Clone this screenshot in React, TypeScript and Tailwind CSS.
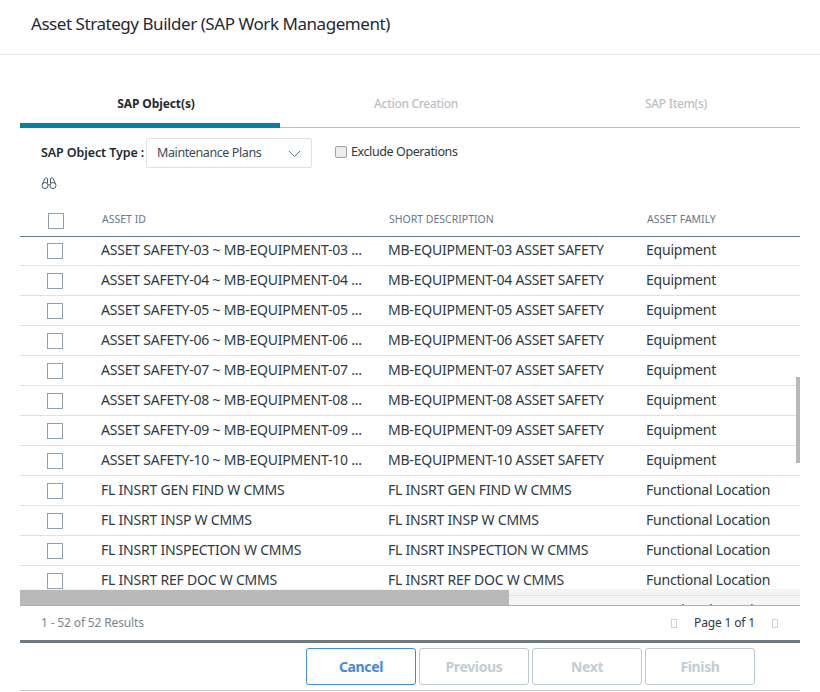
const FONT = "font-['Noto_Sans',sans-serif]";

const ROWS = [
  ["ASSET SAFETY-03 ~ MB-EQUIPMENT-03 ...", "MB-EQUIPMENT-03 ASSET SAFETY", "Equipment"],
  ["ASSET SAFETY-04 ~ MB-EQUIPMENT-04 ...", "MB-EQUIPMENT-04 ASSET SAFETY", "Equipment"],
  ["ASSET SAFETY-05 ~ MB-EQUIPMENT-05 ...", "MB-EQUIPMENT-05 ASSET SAFETY", "Equipment"],
  ["ASSET SAFETY-06 ~ MB-EQUIPMENT-06 ...", "MB-EQUIPMENT-06 ASSET SAFETY", "Equipment"],
  ["ASSET SAFETY-07 ~ MB-EQUIPMENT-07 ...", "MB-EQUIPMENT-07 ASSET SAFETY", "Equipment"],
  ["ASSET SAFETY-08 ~ MB-EQUIPMENT-08 ...", "MB-EQUIPMENT-08 ASSET SAFETY", "Equipment"],
  ["ASSET SAFETY-09 ~ MB-EQUIPMENT-09 ...", "MB-EQUIPMENT-09 ASSET SAFETY", "Equipment"],
  ["ASSET SAFETY-10 ~ MB-EQUIPMENT-10 ...", "MB-EQUIPMENT-10 ASSET SAFETY", "Equipment"],
  ["FL INSRT GEN FIND W CMMS", "FL INSRT GEN FIND W CMMS", "Functional Location"],
  ["FL INSRT INSP W CMMS", "FL INSRT INSP W CMMS", "Functional Location"],
  ["FL INSRT INSPECTION W CMMS", "FL INSRT INSPECTION W CMMS", "Functional Location"],
  ["FL INSRT REF DOC W CMMS", "FL INSRT REF DOC W CMMS", "Functional Location"],
  ["", "", "Functional Location"],
];

export default function App() {
  return (
    <div className={`${FONT} w-[820px] h-[692px] bg-white overflow-hidden text-[#2c3a44]`}>
      <div className="h-[55px] border-b border-[#e8e9ea] pl-[31px] pt-[11px] text-[17px] leading-[26px] tracking-[-0.45px] text-[#1f2a33]">
        Asset Strategy Builder (SAP Work Management)
      </div>

      <div className="px-5">
        <div className="mt-[35px] flex h-[38px] border-b border-[#b8bcbf]">
          <Tab label="SAP Object(s)" active />
          <Tab label="Action Creation" />
          <Tab label="SAP Item(s)" />
        </div>

        <div className="mt-[10px] flex h-[30px] items-center pl-[21px]">
          <span className="w-[105px] text-[12.5px] font-semibold tracking-[-0.1px] text-[#1f2a33]">SAP Object Type :</span>
          <div className="flex h-[30px] w-[166px] items-center justify-between rounded-[2px] border border-[#dfe2e4] pl-[10px] pr-[10px] text-[12.5px] tracking-[-0.4px] text-[#3c4a54]">
            Maintenance Plans
            <svg width="13" height="7" viewBox="0 0 13 7" fill="none" stroke="#5f7482" strokeWidth="1">
              <path d="M1 1l5.500 5.500L12 1" />
            </svg>
          </div>
          <div className="mb-[2px] ml-[23px] flex items-center gap-[4px] text-[12.5px] tracking-[-0.4px] text-[#2c3a44]">
            <span className="mb-px h-[12px] w-[12px] rounded-[2px] border border-[#9a9fa3] bg-[#eeeeee]" />
            Exclude Operations
          </div>
        </div>

        <div className="h-[31px] pl-[21px] pt-[8px]">
          <svg width="16" height="14" viewBox="0 0 16 14" fill="none" strokeWidth="1" stroke="#4a5a68">
            <circle cx="4" cy="9.500" r="3" />
            <circle cx="12" cy="9.500" r="3" />
            <path d="M7 9c.6-.5 1.400-.5 2 0M1.500 8L4 2.500c.5-1 2-.8 2.500 0V7M14.500 8L12 2.500c-.5-1-2-.8-2.500 0V7" />
          </svg>
        </div>

        <div className="flex h-[38px] items-center border-b border-[#64798a] text-[10.5px] text-[#64798a]">
          <div className="w-[82px] pl-[28px] pt-[7px]">
            <span className="block h-4 w-4 border border-[#8da0ad]" />
          </div>
          <div className="w-[287px] pt-[4px]">ASSET ID</div>
          <div className="w-[258px] pt-[4px]">SHORT DESCRIPTION</div>
          <div className="pt-[4px]">ASSET FAMILY</div>
        </div>

        <div className="relative h-[369px] overflow-hidden border-b border-[#a8b0b5]">
          <div className="absolute bottom-0 left-0 h-[16px] w-full bg-[#f5f5f5]" />
          <div className="relative">
            {ROWS.map((row) => (
              <div
                key={row[0] || "clipped"}
                className="flex h-[30px] items-center border-b border-[#dfe1e3] text-[14px] tracking-[-0.22px] text-[#2c3a44] first:h-[29px] first:pb-px"
              >
                <div className="w-[81px] pl-[27px]">
                  {row[0] && <span className="block h-4 w-4 bg-white border border-[#8da0ad]" />}
                </div>
                <div className="w-[287px] whitespace-nowrap pb-[2px]">{row[0]}</div>
                <div className="w-[258px] whitespace-nowrap pb-[2px]">{row[1]}</div>
                <div className="whitespace-nowrap pb-[2px]">{row[2]}</div>
              </div>
            ))}
          </div>
          <div className="absolute right-0 top-[140px] h-[86px] w-1 bg-[#b9b9b9]" />
          <div className="absolute bottom-0 left-0 h-[15px] w-[489px] bg-[#b9b9b9]" />
        </div>

        <div className="flex h-[37px] items-center justify-between border-b-[3px] border-[#6f7a80] pl-[21px] pr-[22px] text-[12px] tracking-[-0.15px]">
          <span className="text-[#7b868c]">1 - 52 of 52 Results</span>
          <div className="flex items-center gap-[17px] text-[#2c3a44]">
            <span className="h-[9px] w-[6px] border border-[#cfd3d6]" />
            Page 1 of 1
            <span className="h-[9px] w-[6px] border border-[#cfd3d6]" />
          </div>
        </div>

        <div className="flex h-[48px] gap-[3px] border-b border-[#c4c8ca] pl-[286px] pt-[5px]">
          <Button label="Cancel" primary />
          <Button label="Previous" />
          <Button label="Next" />
          <Button label="Finish" />
        </div>
      </div>
    </div>
  );
}

function Tab({ label, active }: { label: string; active?: boolean }) {
  return (
    <div
      className={`flex h-[38px] flex-1 justify-center pl-[12px] pt-[5px] text-[12px] ${
        active
          ? "border-b-[5px] border-[#08809f] font-bold tracking-[-0.1px] text-[#1f2a33]"
          : "font-medium tracking-[-0.3px] text-[#bcc0c3]"
      }`}
    >
      {label}
    </div>
  );
}

function Button({ label, primary }: { label: string; primary?: boolean }) {
  return (
    <div
      className={`flex h-[37px] w-[110px] items-center justify-center rounded-[3px] border text-[14px] font-bold tracking-[-0.35px] ${
        primary ? "border-[#3f8ae0] text-[#3f8ae0]" : "border-[#bcc8d0] text-[#c2cdd4]"
      }`}
    >
      {label}
    </div>
  );
}
